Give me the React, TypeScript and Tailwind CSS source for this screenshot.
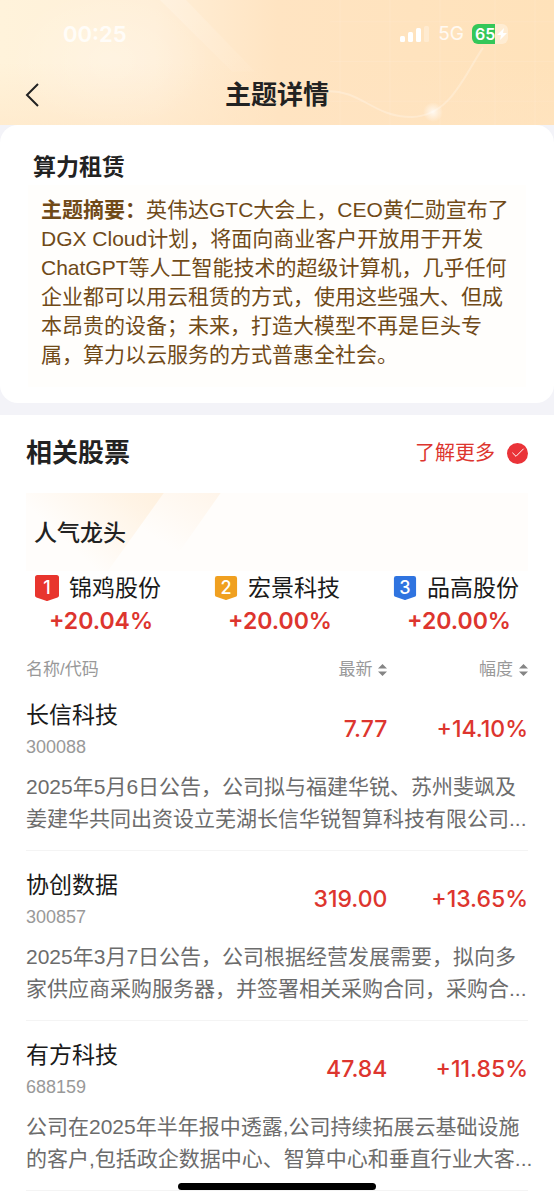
import { Check } from "lucide-react";

type Stock = {
  name: string;
  code: string;
  price: string;
  change: string;
  note: string;
};

const leaders = [
  { rank: 1, name: "锦鸡股份", change: "+20.04%", badge: "text-[#e8352e] h-7 w-6" },
  { rank: 2, name: "宏景科技", change: "+20.00%", badge: "text-[#f0a020] h-6 w-6" },
  { rank: 3, name: "品高股份", change: "+20.00%", badge: "text-[#2f74e0] h-6 w-6" },
];

const stocks: Stock[] = [
  {
    name: "长信科技",
    code: "300088",
    price: "7.77",
    change: "+14.10%",
    note: "2025年5月6日公告，公司拟与福建华锐、苏州斐飒及姜建华共同出资设立芜湖长信华锐智算科技有限公司...",
  },
  {
    name: "协创数据",
    code: "300857",
    price: "319.00",
    change: "+13.65%",
    note: "2025年3月7日公告，公司根据经营发展需要，拟向多家供应商采购服务器，并签署相关采购合同，采购合...",
  },
  {
    name: "有方科技",
    code: "688159",
    price: "47.84",
    change: "+11.85%",
    note: "公司在2025年半年报中透露,公司持续拓展云基础设施的客户,包括政企数据中心、智算中心和垂直行业大客...",
  },
];

const HeaderArt = () => (
  <svg
    className="absolute inset-0 h-full w-full"
    viewBox="0 0 554 126"
    preserveAspectRatio="none"
    aria-hidden="true"
  >
    <defs>
      <linearGradient id="sky" x1="0" x2="1" y1="0" y2="0">
        <stop offset="0" stopColor="#fff3db" />
        <stop offset="0.28" stopColor="#ffefd8" />
        <stop offset="0.5" stopColor="#ffe4c2" />
        <stop offset="1" stopColor="#ffe2ba" />
      </linearGradient>
      <linearGradient id="beam" x1="0" x2="1" y1="0" y2="1">
        <stop offset="0" stopColor="#fff" stopOpacity="0.2" />
        <stop offset="1" stopColor="#fff" stopOpacity="0.04" />
      </linearGradient>
      <linearGradient id="fade" x1="0" x2="0" y1="0" y2="1">
        <stop offset="0.5" stopColor="#ffe4c2" stopOpacity="0" />
        <stop offset="1" stopColor="#ffe4c2" stopOpacity="0.5" />
      </linearGradient>
      <radialGradient id="glow">
        <stop offset="0" stopColor="#fff" stopOpacity="0.75" />
        <stop offset="1" stopColor="#fff" stopOpacity="0" />
      </radialGradient>
    </defs>
    <rect width="554" height="126" fill="url(#sky)" />
    <rect width="554" height="126" fill="url(#fade)" />
    <ellipse cx="110" cy="60" rx="100" ry="70" fill="url(#glow)" opacity="0.3" />
    <path d="M160 0 L186 0 L255 72 L232 72 Z" fill="url(#beam)" />
    <g stroke="#fff" strokeOpacity="0.1" strokeWidth="1">
      <path d="M340 0V126M390 0V126M440 0V126M495 0V126M535 0V126M330 22H554M330 62H554M330 102H554" />
    </g>
    <path
      d="M325 92 C362 90 372 118 412 118 C450 116 462 80 483 48"
      fill="none"
      stroke="#fff"
      strokeOpacity="0.25"
      strokeWidth="2"
    />
    <circle cx="433" cy="113" r="10" fill="url(#glow)" />
  </svg>
);

const StatusBar = () => (
  <div className="flex h-[68px] items-center justify-between pr-[46px] pl-[63px] font-['Inter',sans-serif] text-white/80">
    <span className="text-[22px] leading-7 font-semibold">00:25</span>
    <div className="flex items-center">
      <svg className="mr-2 h-4 w-[30px]" viewBox="0 0 30 16" aria-hidden="true">
        <g fill="#fff">
          <rect x="0" y="10" width="5" height="6" rx="1.5" />
          <rect x="8" y="6" width="5" height="10" rx="1.5" />
          <rect x="16" y="2" width="5" height="14" rx="1.5" />
          <rect x="24" y="0" width="5" height="16" rx="1.5" opacity="0.3" />
        </g>
      </svg>
      <span className="mr-2 text-[19px] leading-6">5G</span>
      <div className="relative flex h-5 w-9 items-center overflow-hidden rounded-md bg-linear-to-r from-[#34c759] from-65% to-white/35 to-65% pl-[3px] text-base leading-5 font-semibold text-white">
        65
        <svg className="absolute top-1 right-0 h-3 w-3" viewBox="0 0 12 12" aria-hidden="true">
          <path d="M8 0 L1 7 H5 L4 12 L11 5 H7 Z" fill="#fff" />
        </svg>
      </div>
    </div>
  </div>
);

const SortIcon = () => (
  <svg className="h-3 w-[9px]" viewBox="0 0 9 12" aria-hidden="true">
    <path d="M4.5 0 L9 4.5 H0 Z M4.5 12 L9 7.5 H0 Z" fill="#858585" />
  </svg>
);

const RankBadge = ({ rank, className }: { rank: number; className: string }) => (
  <span className={`relative flex items-center justify-center ${className}`}>
    <svg className="absolute inset-0 h-full w-full" viewBox="0 0 24 26" aria-hidden="true">
      <path
        d="M2.5 0 H21.5 Q24 0 24 2.5 V20.5 Q24 22 22.5 22.5 L13 25.8 Q12 26.2 11 25.8 L1.5 22.5 Q0 22 0 20.5 V2.5 Q0 0 2.5 0 Z"
        fill="currentColor"
      />
    </svg>
    <span className="relative pb-px font-['Inter',sans-serif] text-lg leading-5 font-medium text-white">
      {rank}
    </span>
  </span>
);

const StockRows = ({ stock }: { stock: Stock }) => (
  <tbody className="border-b border-[#f4f4f4]">
    <tr>
      <th scope="row" className="pt-[18px] text-left font-normal">
        <div className="text-[23px] leading-8 text-[#1a1a1a]">{stock.name}</div>
        <div className="mt-1 text-lg leading-6 text-[#999]">{stock.code}</div>
      </th>
      <td className="pt-[18px] text-right font-['Inter',sans-serif] text-[23px] leading-8 font-medium text-[#dd352e]">
        {stock.price}
      </td>
      <td className="pt-[18px] text-right font-['Inter',sans-serif] text-[23px] leading-8 font-medium text-[#dd352e]">
        {stock.change}
      </td>
    </tr>
    <tr>
      <td colSpan={3} className="pt-3 pb-[15px]">
        <p className="-mr-2 text-[21px] leading-8 text-[#6c6c6c]">{stock.note}</p>
      </td>
    </tr>
  </tbody>
);

const App = () => {
  return (
    <div className="min-h-screen bg-[#f3f3f8] font-['Liberation_Sans','Noto_Sans_CJK_SC',sans-serif] text-[#222]">
      <header className="relative">
        <HeaderArt />
        <div className="relative">
          <StatusBar />
          <div className="grid h-[57px] grid-cols-[1fr_auto_1fr] items-center px-4 pb-1">
            <button type="button" aria-label="返回" className="flex w-8 justify-center">
              <svg className="h-6 w-[14px]" viewBox="0 0 14 24" aria-hidden="true">
                <path d="M13 1 L2 12 L13 23" fill="none" stroke="#222" strokeWidth="2" />
              </svg>
            </button>
            <h1 className="text-[26px] leading-9 font-bold">主题详情</h1>
          </div>
        </div>
      </header>

      <section className="mb-3 rounded-[18px] bg-white px-7 pt-6 pb-4">
        <h2 className="px-[5px] text-[23px] leading-9 font-bold">算力租赁</h2>
        <p className="bg-[#fffefc] pt-[10px] pr-[14px] pb-[18px] pl-[13px] text-[21px] leading-[29px] text-[#704a18]">
          <strong className="font-bold">主题摘要：</strong>
          英伟达GTC大会上，CEO黄仁勋宣布了DGX Cloud计划，将面向商业客户开放用于开发ChatGPT等人工智能技术的超级计算机，几乎任何企业都可以用云租赁的方式，使用这些强大、但成本昂贵的设备；未来，打造大模型不再是巨头专属，算力以云服务的方式普惠全社会。
        </p>
      </section>

      <main className="min-h-[785px] bg-white px-[26px] pt-[18px]">
        <div className="flex items-center justify-between">
          <h2 className="text-[26px] leading-10 font-bold">相关股票</h2>
          <a href="#more" className="flex items-center gap-3 text-xl leading-8 text-[#dd352e]">
            了解更多
            <span className="flex h-[21px] w-[21px] items-center justify-center rounded-full bg-[#ea3338]">
              <Check className="h-4 w-4 text-white" strokeWidth={1.5} />
            </span>
          </a>
        </div>

        <div className="relative mt-5 h-[78px] bg-[#fffdfb] px-2 pt-5">
          <svg
            className="absolute inset-0 h-full w-full"
            viewBox="0 0 503 78"
            preserveAspectRatio="none"
            aria-hidden="true"
          >
            <defs>
              <linearGradient id="bandA" x1="0" x2="1" y1="0.6" y2="0">
                <stop offset="0.2" stopColor="#fff0dd" stopOpacity="0" />
                <stop offset="1" stopColor="#fff1df" />
              </linearGradient>
              <linearGradient id="bandB" x1="0" x2="1" y1="0.6" y2="0">
                <stop offset="0.5" stopColor="#fff5ea" stopOpacity="0" />
                <stop offset="1" stopColor="#fff5ea" />
              </linearGradient>
            </defs>
            <path d="M0 0 H195 L140 78 H0 Z" fill="url(#bandB)" />
            <path d="M0 0 H138 L82 78 H0 Z" fill="url(#bandA)" />
          </svg>
          <h3 className="relative text-[23px] leading-10 font-medium">人气龙头</h3>
        </div>

        <ul className="flex justify-between px-[9px]">
          {leaders.map((item) => (
            <li key={item.rank} className="flex flex-col items-center">
              <div className="flex h-[34px] items-center gap-[10px]">
                <RankBadge rank={item.rank} className={item.badge} />
                <span className="text-[23px] leading-8 text-[#1a1a1a]">{item.name}</span>
              </div>
              <span className="pl-1.5 font-['Inter',sans-serif] text-[23px] leading-8 font-semibold text-[#dd352e]">
                {item.change}
              </span>
            </li>
          ))}
        </ul>

        <table className="mt-[22px] w-full table-fixed border-collapse">
          <thead className="text-[17px] leading-[22px] text-[#999]">
            <tr>
              <th className="w-[44%] text-left font-normal">名称/代码</th>
              <th className="w-[28%] font-normal">
                <button type="button" className="ml-auto flex items-center gap-[6px]">
                  最新
                  <SortIcon />
                </button>
              </th>
              <th className="w-[28%] font-normal">
                <button type="button" className="ml-auto flex items-center gap-[6px]">
                  幅度
                  <SortIcon />
                </button>
              </th>
            </tr>
          </thead>
          {stocks.map((stock) => (
            <StockRows key={stock.code} stock={stock} />
          ))}
        </table>
      </main>

      {/* Home indicator */}
      <div className="fixed bottom-[10px] left-1/2 h-[7px] w-[198px] -translate-x-1/2 rounded-full bg-black" />
    </div>
  );
};

export default App;
